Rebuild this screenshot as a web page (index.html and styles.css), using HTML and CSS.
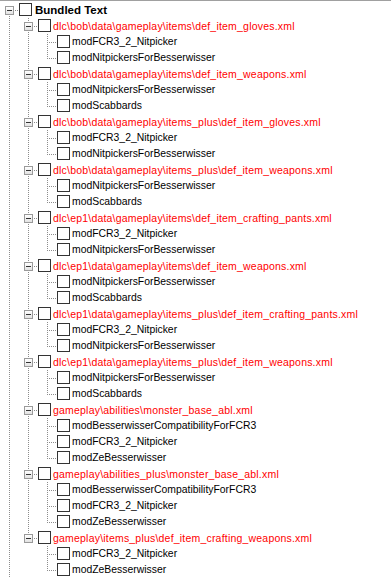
FILE: index.html
```html
<!DOCTYPE html>
<html lang="en">

<head>
	<meta charset="UTF-8">
	<title>Bundled Text</title>
	<link rel="stylesheet" href="styles.css">
</head>

<body>
	<div class="tree">
		<!-- Root -->
		<div class="row">
			<span class="cell first"><span class="expander"></span></span>
			<span class="check"></span>
			<span class="label root_label">Bundled Text</span>
		</div>

		<!-- dlc\bob items -->
		<div class="row">
			<span class="cell pipe"></span><span class="cell tee"><span class="expander"></span></span>
			<span class="check"></span>
			<span class="label file">dlc\bob\data\gameplay\items\def_item_gloves.xml</span>
		</div>
		<div class="row">
			<span class="cell pipe"></span><span class="cell pipe"></span><span class="cell tee"></span>
			<span class="check"></span><span class="label">modFCR3_2_Nitpicker</span>
		</div>
		<div class="row">
			<span class="cell pipe"></span><span class="cell pipe"></span><span class="cell elbow"></span>
			<span class="check"></span><span class="label">modNitpickersForBesserwisser</span>
		</div>

		<div class="row">
			<span class="cell pipe"></span><span class="cell tee"><span class="expander"></span></span>
			<span class="check"></span>
			<span class="label file">dlc\bob\data\gameplay\items\def_item_weapons.xml</span>
		</div>
		<div class="row">
			<span class="cell pipe"></span><span class="cell pipe"></span><span class="cell tee"></span>
			<span class="check"></span><span class="label">modNitpickersForBesserwisser</span>
		</div>
		<div class="row">
			<span class="cell pipe"></span><span class="cell pipe"></span><span class="cell elbow"></span>
			<span class="check"></span><span class="label">modScabbards</span>
		</div>

		<!-- dlc\bob items_plus -->
		<div class="row">
			<span class="cell pipe"></span><span class="cell tee"><span class="expander"></span></span>
			<span class="check"></span>
			<span class="label file">dlc\bob\data\gameplay\items_plus\def_item_gloves.xml</span>
		</div>
		<div class="row">
			<span class="cell pipe"></span><span class="cell pipe"></span><span class="cell tee"></span>
			<span class="check"></span><span class="label">modFCR3_2_Nitpicker</span>
		</div>
		<div class="row">
			<span class="cell pipe"></span><span class="cell pipe"></span><span class="cell elbow"></span>
			<span class="check"></span><span class="label">modNitpickersForBesserwisser</span>
		</div>

		<div class="row">
			<span class="cell pipe"></span><span class="cell tee"><span class="expander"></span></span>
			<span class="check"></span>
			<span class="label file">dlc\bob\data\gameplay\items_plus\def_item_weapons.xml</span>
		</div>
		<div class="row">
			<span class="cell pipe"></span><span class="cell pipe"></span><span class="cell tee"></span>
			<span class="check"></span><span class="label">modNitpickersForBesserwisser</span>
		</div>
		<div class="row">
			<span class="cell pipe"></span><span class="cell pipe"></span><span class="cell elbow"></span>
			<span class="check"></span><span class="label">modScabbards</span>
		</div>

		<!-- dlc\ep1 items -->
		<div class="row">
			<span class="cell pipe"></span><span class="cell tee"><span class="expander"></span></span>
			<span class="check"></span>
			<span class="label file">dlc\ep1\data\gameplay\items\def_item_crafting_pants.xml</span>
		</div>
		<div class="row">
			<span class="cell pipe"></span><span class="cell pipe"></span><span class="cell tee"></span>
			<span class="check"></span><span class="label">modFCR3_2_Nitpicker</span>
		</div>
		<div class="row">
			<span class="cell pipe"></span><span class="cell pipe"></span><span class="cell elbow"></span>
			<span class="check"></span><span class="label">modNitpickersForBesserwisser</span>
		</div>

		<div class="row">
			<span class="cell pipe"></span><span class="cell tee"><span class="expander"></span></span>
			<span class="check"></span>
			<span class="label file">dlc\ep1\data\gameplay\items\def_item_weapons.xml</span>
		</div>
		<div class="row">
			<span class="cell pipe"></span><span class="cell pipe"></span><span class="cell tee"></span>
			<span class="check"></span><span class="label">modNitpickersForBesserwisser</span>
		</div>
		<div class="row">
			<span class="cell pipe"></span><span class="cell pipe"></span><span class="cell elbow"></span>
			<span class="check"></span><span class="label">modScabbards</span>
		</div>

		<!-- dlc\ep1 items_plus -->
		<div class="row">
			<span class="cell pipe"></span><span class="cell tee"><span class="expander"></span></span>
			<span class="check"></span>
			<span class="label file">dlc\ep1\data\gameplay\items_plus\def_item_crafting_pants.xml</span>
		</div>
		<div class="row">
			<span class="cell pipe"></span><span class="cell pipe"></span><span class="cell tee"></span>
			<span class="check"></span><span class="label">modFCR3_2_Nitpicker</span>
		</div>
		<div class="row">
			<span class="cell pipe"></span><span class="cell pipe"></span><span class="cell elbow"></span>
			<span class="check"></span><span class="label">modNitpickersForBesserwisser</span>
		</div>

		<div class="row">
			<span class="cell pipe"></span><span class="cell tee"><span class="expander"></span></span>
			<span class="check"></span>
			<span class="label file">dlc\ep1\data\gameplay\items_plus\def_item_weapons.xml</span>
		</div>
		<div class="row">
			<span class="cell pipe"></span><span class="cell pipe"></span><span class="cell tee"></span>
			<span class="check"></span><span class="label">modNitpickersForBesserwisser</span>
		</div>
		<div class="row">
			<span class="cell pipe"></span><span class="cell pipe"></span><span class="cell elbow"></span>
			<span class="check"></span><span class="label">modScabbards</span>
		</div>

		<!-- abilities -->
		<div class="row">
			<span class="cell pipe"></span><span class="cell tee"><span class="expander"></span></span>
			<span class="check"></span>
			<span class="label file">gameplay\abilities\monster_base_abl.xml</span>
		</div>
		<div class="row">
			<span class="cell pipe"></span><span class="cell pipe"></span><span class="cell tee"></span>
			<span class="check"></span><span class="label">modBesserwisserCompatibilityForFCR3</span>
		</div>
		<div class="row">
			<span class="cell pipe"></span><span class="cell pipe"></span><span class="cell tee"></span>
			<span class="check"></span><span class="label">modFCR3_2_Nitpicker</span>
		</div>
		<div class="row">
			<span class="cell pipe"></span><span class="cell pipe"></span><span class="cell elbow"></span>
			<span class="check"></span><span class="label">modZeBesserwisser</span>
		</div>

		<div class="row">
			<span class="cell pipe"></span><span class="cell tee"><span class="expander"></span></span>
			<span class="check"></span>
			<span class="label file">gameplay\abilities_plus\monster_base_abl.xml</span>
		</div>
		<div class="row">
			<span class="cell pipe"></span><span class="cell pipe"></span><span class="cell tee"></span>
			<span class="check"></span><span class="label">modBesserwisserCompatibilityForFCR3</span>
		</div>
		<div class="row">
			<span class="cell pipe"></span><span class="cell pipe"></span><span class="cell tee"></span>
			<span class="check"></span><span class="label">modFCR3_2_Nitpicker</span>
		</div>
		<div class="row">
			<span class="cell pipe"></span><span class="cell pipe"></span><span class="cell elbow"></span>
			<span class="check"></span><span class="label">modZeBesserwisser</span>
		</div>

		<!-- last group -->
		<div class="row">
			<span class="cell pipe"></span><span class="cell elbow"><span class="expander"></span></span>
			<span class="check"></span>
			<span class="label file">gameplay\items_plus\def_item_crafting_weapons.xml</span>
		</div>
		<div class="row">
			<span class="cell pipe"></span><span class="cell"></span><span class="cell tee"></span>
			<span class="check"></span><span class="label">modFCR3_2_Nitpicker</span>
		</div>
		<div class="row">
			<span class="cell pipe"></span><span class="cell"></span><span class="cell elbow"></span>
			<span class="check"></span><span class="label">modZeBesserwisser</span>
		</div>
	</div>
</body>

</html>
```

FILE: styles.css
```css
* {
	font-family: "Liberation Sans", Arial, sans-serif;
}

body {
	margin: 0;
	background-color: white;
	border-top: 1px solid #a0a0a0;
}

.tree {
	padding-top: 1px;
	font-size: 10.4px;
	color: black;
	--dot_v: repeating-linear-gradient(to bottom, #8c8c8c 0 1px, transparent 1px 2px);
	--dot_h: repeating-linear-gradient(to right, #8c8c8c 0 1px, transparent 1px 2px);
}

.row {
	display: flex;
	align-items: flex-start;
	height: 16px;
	white-space: nowrap;
}

/* One indent column of the tree, 19px wide, draws the dotted lines */
.cell {
	flex: none;
	width: 19px;
	height: 16px;
	box-sizing: border-box;
	padding: 4px 0 0 5px;
	background-repeat: no-repeat;
}

.pipe {
	background-image: var(--dot_v);
	background-size: 1px 16px;
	background-position: 9px 0;
}

.tee {
	background-image: var(--dot_v), var(--dot_h);
	background-size: 1px 16px, 10px 1px;
	background-position: 9px 0, 9px 8px;
}

.elbow {
	background-image: var(--dot_v), var(--dot_h);
	background-size: 1px 9px, 10px 1px;
	background-position: 9px 0, 9px 8px;
}

.first {
	background-image: var(--dot_v), var(--dot_h);
	background-size: 1px 8px, 10px 1px;
	background-position: 9px 8px, 9px 8px;
}

.expander {
	display: flex;
	align-items: center;
	justify-content: center;
	width: 9px;
	height: 9px;
	box-sizing: border-box;
	border: 1px solid #9a9a9a;
	background: linear-gradient(#ffffff, #e2e2e2);
}

.expander::after {
	content: '';
	width: 5px;
	height: 1px;
	background-color: #333333;
}

.check {
	flex: none;
	width: 13px;
	height: 13px;
	box-sizing: border-box;
	margin-top: 1px;
	border: 1px solid #333333;
	background-color: white;
}

.label {
	margin-left: 2px;
	line-height: 16px;
}

.root_label {
	font-weight: bold;
	font-size: 11.5px;
	margin-left: 3px;
}

.file {
	color: #ff0000;
	font-size: 10.5px;
	letter-spacing: 0.2px;
}
```
